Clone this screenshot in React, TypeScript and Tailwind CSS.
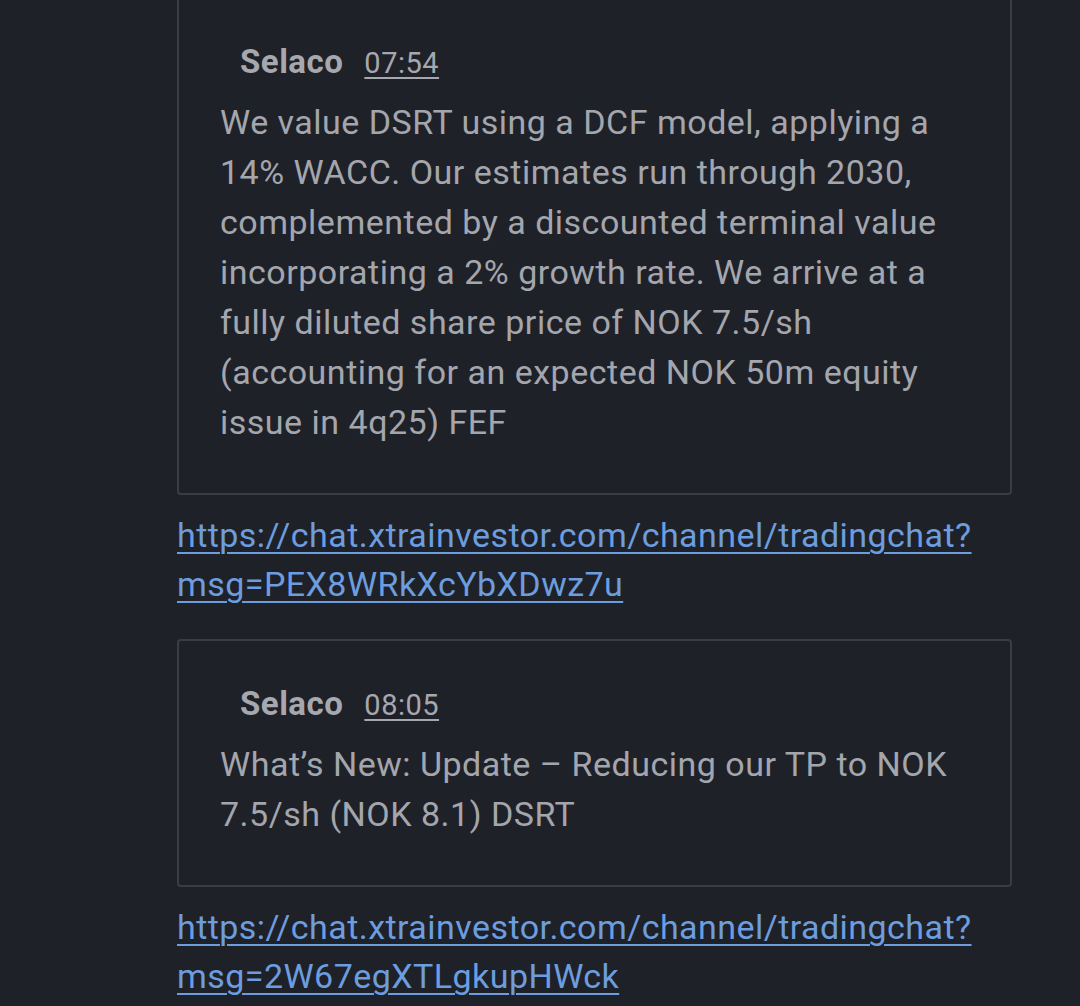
import { FC } from "react";

type Quote = {
  name: string;
  time: string;
  body: string;
  link: [string, string];
};

const quotes: Quote[] = [
  {
    name: "Selaco",
    time: "07:54",
    body: "We value DSRT using a DCF model, applying a 14% WACC. Our estimates run through 2030, complemented by a discounted terminal value incorporating a 2% growth rate. We arrive at a fully diluted share price of NOK 7.5/sh (accounting for an expected NOK 50m equity issue in 4q25) FEF",
    link: ["https://chat.xtrainvestor.com/channel/tradingchat?", "msg=PEX8WRkXcYbXDwz7u"],
  },
  {
    name: "Selaco",
    time: "08:05",
    body: "What\u2019s New: Update \u2013 Reducing our TP to NOK 7.5/sh (NOK 8.1) DSRT",
    link: ["https://chat.xtrainvestor.com/channel/tradingchat?", "msg=2W67egXTLgkupHWck"],
  },
];

const QuoteCard: FC<{ q: Quote; first?: boolean }> = ({ q, first }) => {
  return (
    <div className={first ? "-mt-[3px]" : "mt-[30px]"}>
      <div className="w-[835px] border-2 border-[#3a3d45] rounded-[4px] pl-[41px] pr-[40px] pt-[43px] pb-[46px]">
        <div className="flex items-baseline gap-[21px] pl-[20px] h-[40px] leading-[40px]">
          <span className="text-[33px] tracking-[0.5px] font-bold text-[#a6a8ae]">{q.name}</span>
          <span className="text-[29px] tracking-[0.5px] text-[#a6a8ae] underline underline-offset-[4px] decoration-2">
            {q.time}
          </span>
        </div>
        <p className="mt-[15px] text-[34px] tracking-[0.5px] leading-[50px] text-[#a4a6ad]">{q.body}</p>
      </div>
      <a
        href="#"
        className="block mt-[16px] text-[34px] tracking-[0.45px] leading-[49px] text-[#6c9ddf] underline underline-offset-[5px] decoration-2"
      >
        {q.link[0]}
        <br />
        {q.link[1]}
      </a>
    </div>
  );
};

const App: FC = () => {
  return (
    <div
      className="bg-[#1f2129] min-h-[1006px] w-[1080px] overflow-hidden pl-[177px]"
      style={{ fontFamily: "Roboto, 'Noto Sans', sans-serif" }}
    >
      {quotes.map((q, i) => (
        <QuoteCard key={i} q={q} first={i === 0} />
      ))}
    </div>
  );
};

export default App;
